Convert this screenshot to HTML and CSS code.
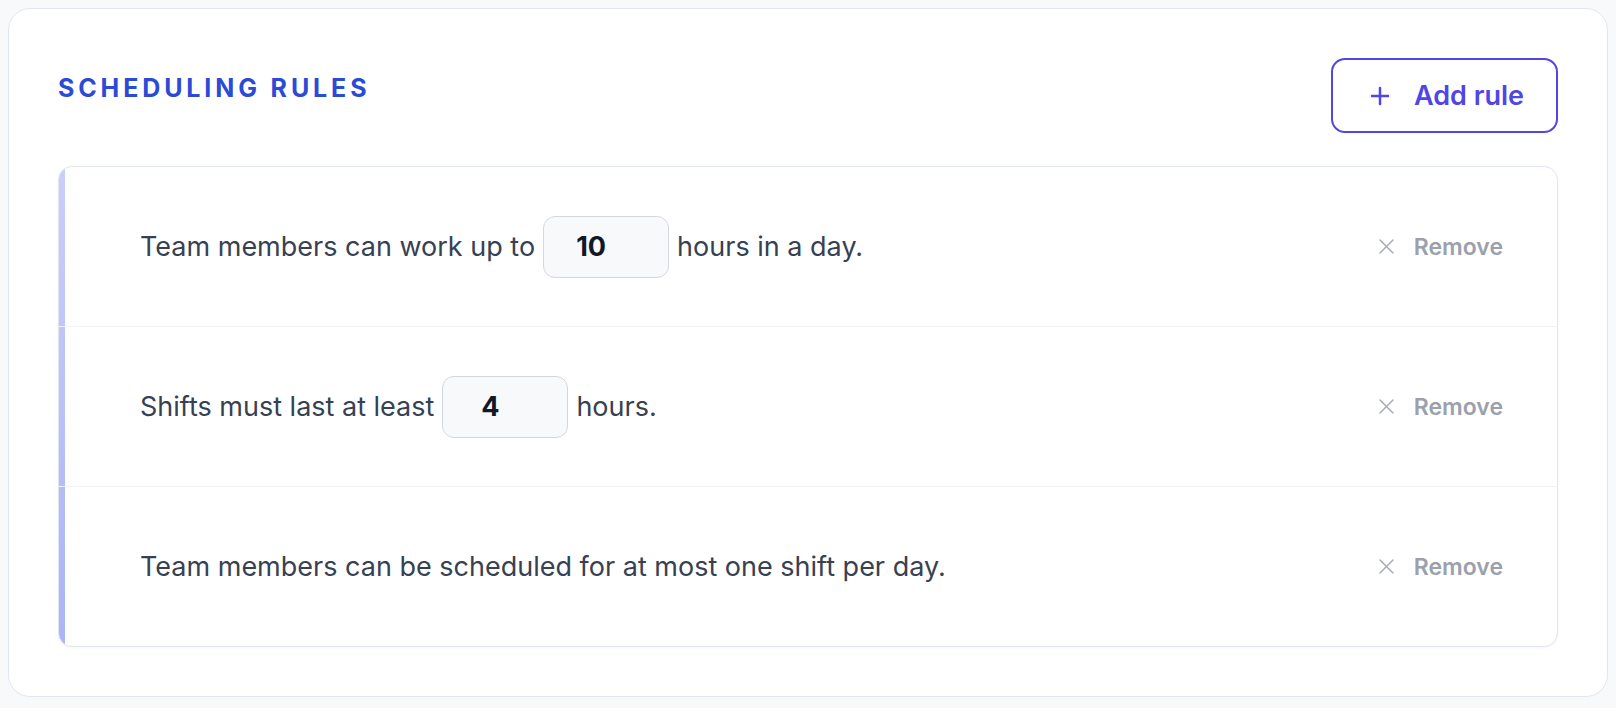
FILE: index.html
```html
<!DOCTYPE html>
<html lang="en">
<head>
    <meta charset="UTF-8">
    <title>Scheduling rules</title>
    <link rel="stylesheet" href="styles.css">
</head>
<body>

<div class="card">
    <div class="card-head">
        <h2 class="title">Scheduling rules</h2>
        <button class="add-btn">
            <svg width="20" height="20" viewBox="0 0 20 20" fill="none" stroke="currentColor" stroke-width="2.5" stroke-linecap="round">
                <path d="M10 2v16M2 10h16"/>
            </svg>
            Add rule
        </button>
    </div>

    <div class="rules">
        <div class="rule">
            <div class="rule-text">
                <span>Team members can work up to</span>
                <span class="num">10</span>
                <span>hours in a day.</span>
            </div>
            <button class="remove">
                <svg width="15" height="15" viewBox="0 0 15 15" fill="none" stroke="currentColor" stroke-width="1.5" stroke-linecap="round">
                    <path d="M1 1l13 13M14 1L1 14"/>
                </svg>
                Remove
            </button>
        </div>
        <div class="rule">
            <div class="rule-text">
                <span>Shifts must last at least</span>
                <span class="num">4</span>
                <span>hours.</span>
            </div>
            <button class="remove">
                <svg width="15" height="15" viewBox="0 0 15 15" fill="none" stroke="currentColor" stroke-width="1.5" stroke-linecap="round">
                    <path d="M1 1l13 13M14 1L1 14"/>
                </svg>
                Remove
            </button>
        </div>
        <div class="rule">
            <div class="rule-text">
                <span>Team members can be scheduled for at most one shift per day.</span>
            </div>
            <button class="remove">
                <svg width="15" height="15" viewBox="0 0 15 15" fill="none" stroke="currentColor" stroke-width="1.5" stroke-linecap="round">
                    <path d="M1 1l13 13M14 1L1 14"/>
                </svg>
                Remove
            </button>
        </div>
    </div>
</div>

</body>
</html>
```

FILE: styles.css
```css
body {
    font-family: 'Inter', 'Noto Sans', sans-serif;
    margin: 0;
    padding: 8px;
    background: #f8f9fb;
    color: #374151;
}

.card {
    background: #fff;
    border: 1px solid #e2e6ee;
    border-radius: 22px;
    padding: 49px;
}

.card-head {
    display: flex;
    justify-content: space-between;
    align-items: flex-start;
    margin-bottom: 33px;
}

.title {
    margin: 15px 0 0;
    font-size: 25px;
    font-weight: 700;
    letter-spacing: 0.155em;
    text-transform: uppercase;
    color: #2b4bd6;
}

.add-btn {
    display: flex;
    align-items: center;
    gap: 24px;
    height: 75px;
    padding: 0 32px 0 37px;
    font-family: inherit;
    font-size: 27px;
    font-weight: 600;
    color: #4f46e5;
    background: #fff;
    border: 2px solid #4f46e5;
    border-radius: 14px;
    cursor: pointer;
}

.rules {
    border: 1px solid #e2e6ee;
    border-radius: 14px;
    overflow: hidden;
    background: linear-gradient(#c9cffa, #aab4f7) left / 6px 100% no-repeat, #fff;
    box-shadow: 0 1px 3px rgba(15, 23, 42, 0.04);
}

.rule {
    display: flex;
    align-items: center;
    justify-content: space-between;
    min-height: 159px;
    padding: 0 54px 0 81px;
    border-top: 1px solid #eff2f6;
}

.rule:first-child {
    border-top: none;
}

.rule-text {
    display: flex;
    align-items: center;
    gap: 8px;
    font-size: 27px;
}

.num {
    width: 62px;
    height: 60px;
    padding: 0 46px 0 16px;
    display: flex;
    align-items: center;
    justify-content: center;
    font-weight: 700;
    color: #111827;
    background: #f8f9fb;
    border: 1px solid #d3d7de;
    border-radius: 12px;
}

.remove {
    display: flex;
    align-items: center;
    gap: 20px;
    padding: 0;
    font-family: inherit;
    font-size: 23px;
    font-weight: 600;
    color: #9aa1ad;
    background: none;
    border: none;
    cursor: pointer;
}

.remove svg {
    color: #a7adb8;
}
```
